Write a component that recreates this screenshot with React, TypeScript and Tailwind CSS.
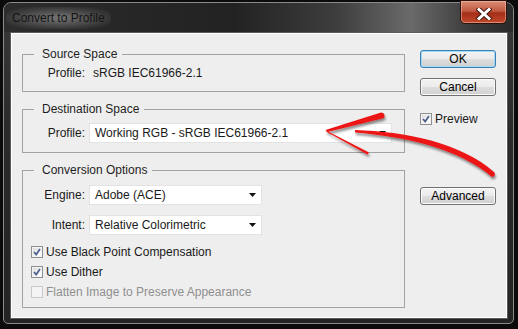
import React from "react";

function Checkbox({ checked, disabled }: { checked?: boolean; disabled?: boolean }) {
  return (
    <span
      className={`w-[12px] h-[12px] border shrink-0 flex items-center justify-center ${
        disabled
          ? "border-[#c9c9c9] bg-[#f4f4f4]"
          : "border-[#8e8f8f] bg-[linear-gradient(135deg,#d6d6d6,#f6f6f6_60%,#ffffff)] shadow-[inset_0_0_0_1px_#f4f4f4]"
      }`}
    >
      {checked && (
        <svg width="8" height="8" viewBox="0 0 8 8">
          <path d="M1 4 L3.2 6.6 L7 1" fill="none" stroke="#4b5f8e" strokeWidth="1.7" />
        </svg>
      )}
    </span>
  );
}

function Select({ value, wide }: { value: string; wide?: boolean }) {
  return (
    <div
      className={`h-[20px] bg-white border border-[#e3e3e3] flex items-center pl-[5px] pr-[4px] ${
        wide ? "w-[303px]" : "w-[173px]"
      }`}
    >
      <span className="flex-1 whitespace-nowrap">{value}</span>
      <svg width="7" height="4" viewBox="0 0 7 4" className="mr-[1px]">
        <path d="M0 0H7L3.5 4Z" fill="#111" />
      </svg>
    </div>
  );
}

function Button({ label, isDefault }: { label: string; isDefault?: boolean }) {
  return (
    <button
      className={`w-[76px] h-[18px] rounded-[3px] border text-[12px] leading-[14px] text-black flex items-center justify-center bg-[linear-gradient(#f3f3f3,#ebebeb_48%,#dddddd_52%,#d0d0d0)] ${
        isDefault
          ? "border-[#3c7fb1] shadow-[inset_0_0_0_1px_#9fdcf5]"
          : "border-[#707070] shadow-[inset_0_0_0_1px_#fcfcfc]"
      }`}
    >
      {label}
    </button>
  );
}

function Legend({ text }: { text: string }) {
  return <legend className="ml-[11px] pl-[8px] pr-[5px] leading-[14px] text-[#1e1e1e]">{text}</legend>;
}

function RedArrow() {
  return (
    <svg className="absolute inset-0 pointer-events-none" width="518" height="329" viewBox="0 0 518 329">
      <defs>
        <filter id="sh" x="-10%" y="-30%" width="130%" height="180%">
          <feDropShadow dx="1" dy="2.5" stdDeviation="1.3" floodColor="#000" floodOpacity="0.45" />
        </filter>
      </defs>
      <g fill="#ec1212" filter="url(#sh)">
        <path d="M355 130 C405 131.5 461 142.5 494.5 172.5 Q496 176 492 177 C459 148.5 405 136.5 355 132.5 Z" />
        <path d="M325.5 130 L381 112.5 Q386 113 384 118 L327.5 132 Z" />
        <path d="M326 130.5 L369 152.5 L367.5 154.5 L327 132 Z" />
      </g>
    </svg>
  );
}

export default function App() {
  return (
    <div className="relative w-[518px] h-[329px] overflow-hidden bg-[#0b0b0b] pt-[2px] pl-[3px] font-['Liberation_Sans',Arial,sans-serif] text-[12px] text-[#1a1a1a]">
      <div className="w-[511px] h-[322px] rounded-t-[8px] rounded-b-[5px] border border-[#8a8a8a] bg-[linear-gradient(#3a3a3a,#2a2a2a_40%,#242424)] flex flex-col">
        {/* title bar */}
        <div className="h-[29px] shrink-0 flex justify-between rounded-t-[7px] bg-[linear-gradient(90deg,#2c2c2c_0%,#222_45%,#3d3d3d_65%,#6a6a6a_80%,#3a3a3a_92%,#2a2a2a_100%)]">
          <div className="flex items-center pl-[2px]">
            <span className="px-[6px] py-[4px] rounded-[12px] bg-[radial-gradient(ellipse_at_center,rgba(170,170,170,0.6),rgba(110,110,110,0.3)_60%,transparent_85%)] text-[#141414] leading-[14px]">
              Convert to Profile
            </span>
          </div>
          <div className="mr-[6px] -mt-[3px] w-[47px] h-[24px] rounded-b-[5px] border border-[#2b120d] bg-[linear-gradient(#d98d78,#c25a42_45%,#a52e17_55%,#c04a2c)] shadow-[inset_0_0_0_1px_rgba(255,200,180,0.5)] flex items-center justify-center pt-[3px]">
            <svg width="16" height="12" viewBox="0 0 16 12">
              <path d="M3 1.5 L13 10.5 M13 1.5 L3 10.5" stroke="#4a1a10" strokeWidth="5" strokeLinecap="square" />
              <path d="M3 1.5 L13 10.5 M13 1.5 L3 10.5" stroke="#ffffff" strokeWidth="3" strokeLinecap="square" />
            </svg>
          </div>
        </div>

        {/* content */}
        <div className="flex-1 ml-[6px] mr-[5px] mb-[4px] border border-[#5b5b5b] bg-[#eeeeee] shadow-[inset_0_0_0_1px_#ffffff] flex pl-[11px] pt-[14px]">
          <div className="w-[383px] flex flex-col gap-[10px]">
            <fieldset className="border border-[#a3a3a3] pb-[11px]">
              <Legend text="Source Space" />
              <div className="mt-[5px] flex leading-[14px]">
                <span className="w-[62px] text-right">Profile:</span>
                <span className="ml-[8px]">sRGB IEC61966-2.1</span>
              </div>
            </fieldset>

            <fieldset className="border border-[#a3a3a3] pb-[9px]">
              <Legend text="Destination Space" />
              <div className="mt-[7px] flex items-center">
                <span className="w-[62px] text-right">Profile:</span>
                <div className="ml-[4px]">
                  <Select value="Working RGB - sRGB IEC61966-2.1" wide />
                </div>
              </div>
            </fieldset>

            <fieldset className="border border-[#a3a3a3] pb-[5px]">
              <Legend text="Conversion Options" />
              <div className="mt-[8px] flex items-center">
                <span className="w-[62px] text-right">Engine:</span>
                <div className="ml-[4px]">
                  <Select value="Adobe (ACE)" />
                </div>
              </div>
              <div className="mt-[10px] flex items-center">
                <span className="w-[62px] text-right">Intent:</span>
                <div className="ml-[4px]">
                  <Select value="Relative Colorimetric" />
                </div>
              </div>
              <div className="mt-[7px] pl-[8px] flex flex-col">
                <label className="h-[20px] flex items-center gap-[3px]">
                  <Checkbox checked />
                  <span>Use Black Point Compensation</span>
                </label>
                <label className="h-[20px] flex items-center gap-[3px]">
                  <Checkbox checked />
                  <span>Use Dither</span>
                </label>
                <label className="h-[20px] flex items-center gap-[3px]">
                  <Checkbox disabled />
                  <span className="text-[#8e8e8e]">Flatten Image to Preserve Appearance</span>
                </label>
              </div>
            </fieldset>
          </div>

          <div className="ml-[15px] flex flex-col pt-[3px]">
            <Button label="OK" isDefault />
            <div className="mt-[10px]">
              <Button label="Cancel" />
            </div>
            <label className="mt-[16px] flex items-center gap-[3px] h-[13px]">
              <Checkbox checked />
              <span>Preview</span>
            </label>
            <div className="mt-[62px]">
              <Button label="Advanced" />
            </div>
          </div>
        </div>
      </div>
      <RedArrow />
    </div>
  );
}
